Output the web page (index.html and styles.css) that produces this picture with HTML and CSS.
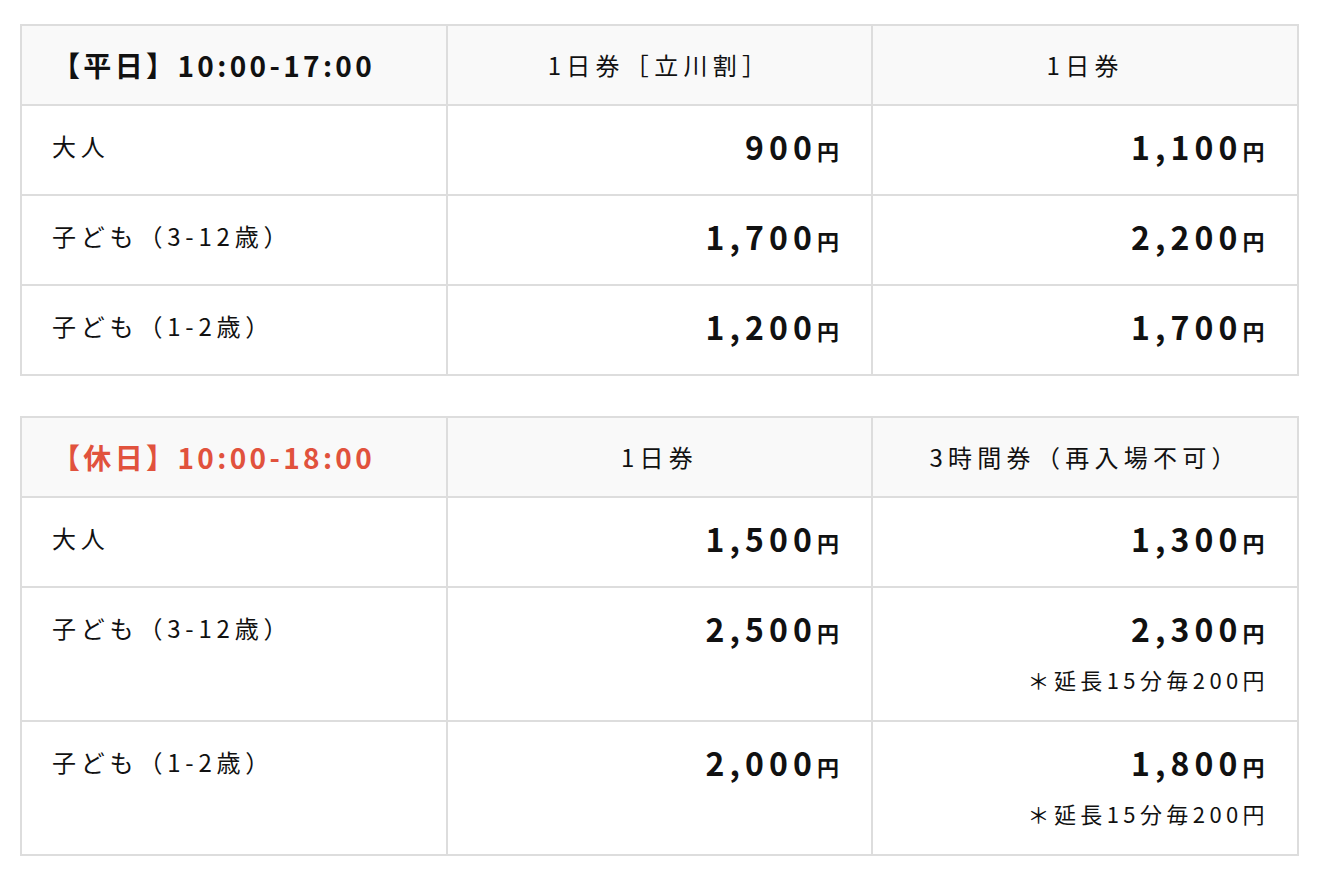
FILE: index.html
```html
<!DOCTYPE html>
<html lang="ja">
<head>
<meta charset="utf-8">
<title>料金</title>
<link rel="stylesheet" href="styles.css">
</head>
<body>
<div class="page">
  <table class="price-table">
    <colgroup><col><col><col></colgroup>
    <thead>
      <tr>
        <th class="period">【平日】10:00-17:00</th>
        <th class="ticket">1日券［立川割］</th>
        <th class="ticket">1日券</th>
      </tr>
    </thead>
    <tbody>
      <tr>
        <td class="label">大人</td>
        <td class="price"><div class="amount"><span class="num">900</span><span class="yen">円</span></div></td>
        <td class="price"><div class="amount"><span class="num">1,100</span><span class="yen">円</span></div></td>
      </tr>
      <tr>
        <td class="label">子ども（3-12歳）</td>
        <td class="price"><div class="amount"><span class="num">1,700</span><span class="yen">円</span></div></td>
        <td class="price"><div class="amount"><span class="num">2,200</span><span class="yen">円</span></div></td>
      </tr>
      <tr>
        <td class="label">子ども（1-2歳）</td>
        <td class="price"><div class="amount"><span class="num">1,200</span><span class="yen">円</span></div></td>
        <td class="price"><div class="amount"><span class="num">1,700</span><span class="yen">円</span></div></td>
      </tr>
    </tbody>
  </table>

  <table class="price-table">
    <colgroup><col><col><col></colgroup>
    <thead>
      <tr>
        <th class="period holiday">【休日】10:00-18:00</th>
        <th class="ticket">1日券</th>
        <th class="ticket">3時間券（再入場不可）</th>
      </tr>
    </thead>
    <tbody>
      <tr>
        <td class="label">大人</td>
        <td class="price"><div class="amount"><span class="num">1,500</span><span class="yen">円</span></div></td>
        <td class="price"><div class="amount"><span class="num">1,300</span><span class="yen">円</span></div></td>
      </tr>
      <tr>
        <td class="label">子ども（3-12歳）</td>
        <td class="price"><div class="amount"><span class="num">2,500</span><span class="yen">円</span></div></td>
        <td class="price"><div class="amount"><span class="num">2,300</span><span class="yen">円</span></div><div class="note">＊延長15分毎200円</div></td>
      </tr>
      <tr>
        <td class="label">子ども（1-2歳）</td>
        <td class="price"><div class="amount"><span class="num">2,000</span><span class="yen">円</span></div></td>
        <td class="price"><div class="amount"><span class="num">1,800</span><span class="yen">円</span></div><div class="note">＊延長15分毎200円</div></td>
      </tr>
    </tbody>
  </table>
</div>
</body>
</html>
```

FILE: styles.css
```css
html, body {
  margin: 0;
  padding: 0;
  background: #ffffff;
}

body {
  font-family: "Noto Sans CJK JP", "Noto Sans", sans-serif;
  color: #111111;
}

.page {
  padding: 24px 0 0 20px;
  display: flex;
  flex-direction: column;
  gap: 40px;
}

.price-table {
  width: 1279px;
  border-collapse: collapse;
  table-layout: fixed;
}

.price-table th,
.price-table td {
  border: 2px solid #dddddd;
  vertical-align: top;
}

.price-table th {
  background: #f9f9f9;
  padding: 17px 30px;
  height: 44px;
  line-height: 44px;
  font-weight: 400;
  font-size: 24px;
}

.price-table th.period {
  text-align: left;
  font-weight: 700;
  font-size: 28px;
  letter-spacing: 0.12em;
}

.price-table th.holiday {
  color: #e1523d;
}

.price-table th.ticket {
  text-align: center;
  letter-spacing: 0.22em;
}

.price-table td {
  padding: 18px 28px 26px 30px;
  line-height: 44px;
}

.label {
  font-size: 24px;
  letter-spacing: 0.2em;
}

.price {
  text-align: right;
  font-weight: 700;
}

.amount {
  height: 44px;
  display: flex;
  justify-content: flex-end;
  align-items: baseline;
  line-height: 44px;
}

.num {
  font-size: 32px;
  line-height: 44px;
  letter-spacing: 0.16em;
}

.yen {
  font-size: 22px;
  line-height: 44px;
  letter-spacing: 0.2em;
}

.note {
  margin-top: 14px;
  height: 30px;
  line-height: 30px;
  font-size: 22px;
  font-weight: 400;
  letter-spacing: 0.2em;
}
```
